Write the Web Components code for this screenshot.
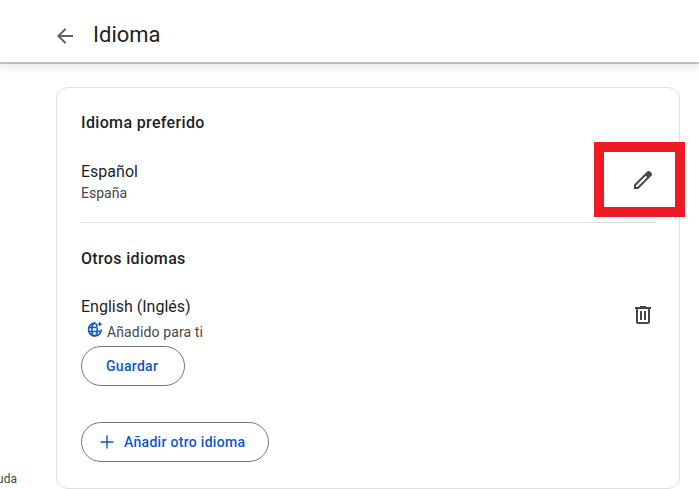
<!DOCTYPE html>
<html lang="es">
<head>
<meta charset="utf-8">
<title>Idioma</title>
<style>
  html, body { margin: 0; height: 100%; overflow: hidden; background: #fff; }
  body { font-family: Roboto, "Liberation Sans", sans-serif; color: #1f1f1f; }
</style>
</head>
<body>
<language-page></language-page>

<script>
const ICONS = {
  back: '<svg width="24" height="24" viewBox="0 0 24 24" fill="#5f6368"><path d="M20 11H7.800l5.600-5.600L12 4l-8 8 8 8 1.400-1.400L7.800 13H20z"/></svg>',
  pencil: '<svg width="24" height="24" viewBox="0 0 24 24" fill="#444746"><path d="M5 19h1.425L16.200 9.225 14.775 7.800 5 17.575V19Zm-2 2v-4.250L16.200 3.575c.2-.183.421-.325.663-.425.242-.1.496-.15.762-.15s.525.05.775.15c.25.1.467.25.650.45l1.375 1.400c.2.183.346.4.438.650.092.25.137.5.137.75 0 .267-.046.521-.137.763-.092.242-.238.463-.438.662L7.250 21H3Z"/></svg>',
  trash: '<svg width="24" height="24" viewBox="0 0 24 24" fill="#444746"><path d="M15 4V3H9v1H4v2h1v13c0 1.100.9 2 2 2h10c1.100 0 2-.9 2-2V6h1V4h-5zm2 15H7V6h10v13z"/><path d="M9 8h2v9H9zM13 8h2v9h-2z"/></svg>',
  plus: '<svg width="18" height="18" viewBox="0 0 18 18" fill="#0b57d0"><path d="M8.300 2.500h1.400v5.800h5.800v1.400H9.700v5.800H8.300V9.700H2.500V8.300h5.800z"/></svg>',
  globe: '<svg width="16" height="16" viewBox="0 0 16 16" fill="none" stroke="#0b57d0" stroke-width="1.600"><path d="M8.600 2.200A6.400 6.400 0 1 0 14.300 8.500"/><ellipse cx="7.500" cy="8.500" rx="2.700" ry="6.300"/><path d="M1.500 6.500h7.500M1.500 10.500h12"/><path d="M12.800 0.400l.8 1.900 1.900.8-1.900.8-.8 1.900-.8-1.900-1.900-.8 1.900-.8z" fill="#0b57d0" stroke="none"/></svg>'
};

class TopBar extends HTMLElement {
  constructor() {
    super();
    this.attachShadow({ mode: 'open' });
  }
  connectedCallback() {
    this.shadowRoot.innerHTML = `
      <style>
        :host {
          display: flex;
          align-items: center;
          height: 62px;
          padding: 8px 0 0 53px;
          background: #fff;
          box-shadow: 0 2px 0 rgba(60,64,67,.28), 0 4px 8px 2px rgba(60,64,67,.1);
          position: relative;
          z-index: 1;
          box-sizing: border-box;
        }
        .title { margin-left: 16px; font-size: 22px; line-height: 28px; color: #1f1f1f; }
        svg { display: block; margin-top: 1px; }
      </style>
      ${ICONS.back}
      <span class="title"><slot></slot></span>
    `;
  }
}

class LangRow extends HTMLElement {
  constructor() {
    super();
    this.attachShadow({ mode: 'open' });
  }
  connectedCallback() {
    const icon = ICONS[this.getAttribute('icon')] || '';
    this.shadowRoot.innerHTML = `
      <style>
        :host { display: flex; justify-content: space-between; align-items: flex-start; }
        .name { font-size: 16px; line-height: 24px; color: #1f1f1f; }
        .sub { font-size: 14px; line-height: 20px; color: #444746; }
        .action { margin: 8px 1px 0 0; }
        svg { display: block; }
      </style>
      <div>
        <div class="name"><slot name="name"></slot></div>
        <div class="sub"><slot name="sub"></slot></div>
        <slot></slot>
      </div>
      <div class="action">${icon}</div>
    `;
  }
}

class PillButton extends HTMLElement {
  constructor() {
    super();
    this.attachShadow({ mode: 'open' });
  }
  connectedCallback() {
    const icon = ICONS[this.getAttribute('icon')] || '';
    this.shadowRoot.innerHTML = `
      <style>
        :host {
          display: inline-flex;
          align-items: center;
          gap: 8px;
          height: 40px;
          box-sizing: border-box;
          padding: 0 26px 0 24px;
          border: 1px solid #747775;
          border-radius: 20px;
          background: #fff;
          color: #0b57d0;
          font-size: 14px;
          font-weight: 500;
          letter-spacing: .3px;
        }
        :host([icon]) { padding: 0 23px 0 16px; }
        svg { display: block; }
      </style>
      ${icon}<slot></slot>
    `;
  }
}

class LanguagePage extends HTMLElement {
  constructor() {
    super();
    this.attachShadow({ mode: 'open' });
  }
  connectedCallback() {
    this.shadowRoot.innerHTML = `
      <style>
        :host { display: flex; flex-direction: column; height: 489px; overflow: hidden; }
        .body { flex: 1; display: grid; grid-template-columns: 56px 624px; grid-template-rows: 402px; padding-top: 25px; min-height: 0; }
        .side { display: flex; justify-content: flex-end; align-items: flex-end; overflow: hidden; padding-bottom: 1px; }
        .side span { font-size: 12px; line-height: 18px; color: #444746; margin-right: 39px; white-space: nowrap; }
        .card {
          position: relative;
          box-sizing: border-box;
          height: 402px;
          border: 1px solid #e0e0e0;
          border-radius: 12px;
          padding: 23px 23px 0 24px;
        }
        h2 { margin: 0; font-size: 16px; line-height: 24px; font-weight: 500; letter-spacing: .35px; color: #1f1f1f; }
        .first { margin-top: 25px; height: 60px; }
        .place { display: block; margin-top: -1px; }
        hr { margin: 2px 0 0; border: 0; border-top: 1px solid #e0e0e0; }
        .others { margin-top: 24px; }
        .second { margin-top: 24px; }
        .added { display: flex; align-items: center; margin-top: 3px; letter-spacing: .13px; }
        .added svg { display: block; margin: -6px 4px 0 6px; }
        .second pill-button { margin-top: 4px; }
        .add { margin-top: 36px; }
        .mark {
          position: absolute;
          left: 537px;
          top: 54px;
          width: 91px;
          height: 75px;
          box-sizing: border-box;
          border: 10px solid #ed1c24;
        }
      </style>
      <top-bar>Idioma</top-bar>
      <div class="body">
        <div class="side"><span>Ayuda</span></div>
        <div class="card">
          <h2>Idioma preferido</h2>
          <lang-row class="first" icon="pencil">
            <span slot="name">Español</span>
            <span slot="sub" class="place">España</span>
          </lang-row>
          <hr>
          <h2 class="others">Otros idiomas</h2>
          <lang-row class="second" icon="trash">
            <span slot="name">English (Inglés)</span>
            <span slot="sub" class="added">${ICONS.globe}Añadido para ti</span>
            <pill-button>Guardar</pill-button>
          </lang-row>
          <pill-button class="add" icon="plus">Añadir otro idioma</pill-button>
          <div class="mark"></div>
        </div>
      </div>
    `;
  }
}

customElements.define('top-bar', TopBar);
customElements.define('lang-row', LangRow);
customElements.define('pill-button', PillButton);
customElements.define('language-page', LanguagePage);
</script>
</body>
</html>
